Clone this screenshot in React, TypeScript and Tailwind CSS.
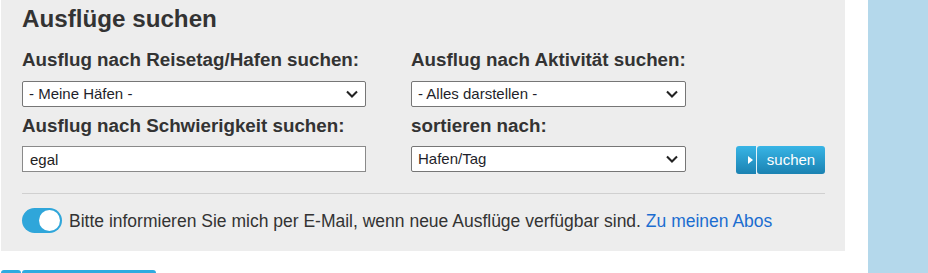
function Chevron() {
  return (
    <svg width="12" height="8" viewBox="0 0 12 8" className="text-[#222]">
      <polyline points="1,1.5 6,6.5 11,1.5" fill="none" stroke="currentColor" strokeWidth="2.1" />
    </svg>
  );
}

function FakeSelect({ value, width }: { value: string; width: string }) {
  return (
    <div
      className={`${width} h-[26px] mt-[10px] flex items-center justify-between bg-white border border-[#767676] rounded-[2px] pl-[6px] pr-[7px] text-[15px] text-[#1f1f2b]`}
    >
      <span>{value}</span>
      <Chevron />
    </div>
  );
}

export default function App() {
  return (
    <div
      className="h-[273px] overflow-hidden bg-white flex"
      style={{ fontFamily: '"Liberation Sans", Arial, sans-serif' }}
    >
      <div className="w-[845px] pl-px flex flex-col">
        <section className="bg-[#ededed] pt-[5px] pl-[21px] pr-[20px] pb-[18px] text-[#333]">
          <h1 className="text-[24.2px] leading-[28px] font-bold">Ausflüge suchen</h1>

          <div className="flex mt-[16px]">
            <div className="w-[344px]">
              <label className="block text-[18.8px] leading-[22px] font-bold whitespace-nowrap">
                Ausflug nach Reisetag/Hafen suchen:
              </label>
              <FakeSelect value="- Meine Häfen -" width="w-[344px]" />
            </div>
            <div className="w-[275px] ml-[45px]">
              <label className="block text-[18.8px] leading-[22px] font-bold whitespace-nowrap">
                Ausflug nach Aktivität suchen:
              </label>
              <FakeSelect value="- Alles darstellen -" width="w-[275px]" />
            </div>
          </div>

          <div className="flex mt-[8px]">
            <div className="w-[344px]">
              <label className="block text-[18.8px] leading-[22px] font-bold whitespace-nowrap">
                Ausflug nach Schwierigkeit suchen:
              </label>
              <input
                defaultValue="egal"
                className="w-[344px] h-[26px] mt-[9px] bg-white border border-[#8a8a8a] px-[7px] text-[15px] text-[#222] outline-none"
              />
            </div>
            <div className="w-[275px] ml-[45px]">
              <label className="block text-[18.8px] leading-[22px] font-bold">sortieren nach:</label>
              <div className="-mt-px">
                <FakeSelect value="Hafen/Tag" width="w-[275px]" />
              </div>
            </div>
            <div className="ml-[50px] pt-[31px]">
              <button className="flex h-[28px] text-white text-[15px]">
                <span className="w-[20px] h-full flex items-center justify-end pr-[3px] rounded-l-[3px] bg-gradient-to-b from-[#38b5e6] to-[#1a82b2]">
                  <span className="w-0 h-0 border-y-[4px] border-y-transparent border-l-[5px] border-l-white" />
                </span>
                <span className="w-px h-full bg-[#e6f3f9]" />
                <span className="w-[68px] h-full flex items-center justify-center rounded-[3px] bg-gradient-to-b from-[#38b5e6] to-[#1a82b2]">
                  suchen
                </span>
              </button>
            </div>
          </div>

          <div className="h-px bg-[#d0d0d0] mt-[19px] w-[803px]" />

          <div className="flex items-center mt-[14px]">
            <span className="w-[40px] h-[25px] rounded-full bg-[#2fa6da] flex items-center justify-end pr-[2px]">
              <span className="w-[21px] h-[21px] rounded-full bg-white" />
            </span>
            <p className="ml-[7px] text-[17.5px] leading-[20px] text-[#333] whitespace-nowrap">
              Bitte informieren Sie mich per E-Mail, wenn neue Ausflüge verfügbar sind.{' '}
              <a className="text-[#1c6dd0]">Zu meinen Abos</a>
            </p>
          </div>
        </section>

        <div className="flex mt-[19px]">
          <span className="w-[20px] h-[12px] rounded-t-[3px] bg-[#2eabe0]" />
          <span className="w-[134px] h-[12px] ml-px rounded-t-[3px] bg-[#2eabe0]" />
        </div>
      </div>

      <div className="w-[23px]" />
      <div className="flex-1 bg-[#b4d8eb]" />
    </div>
  );
}
